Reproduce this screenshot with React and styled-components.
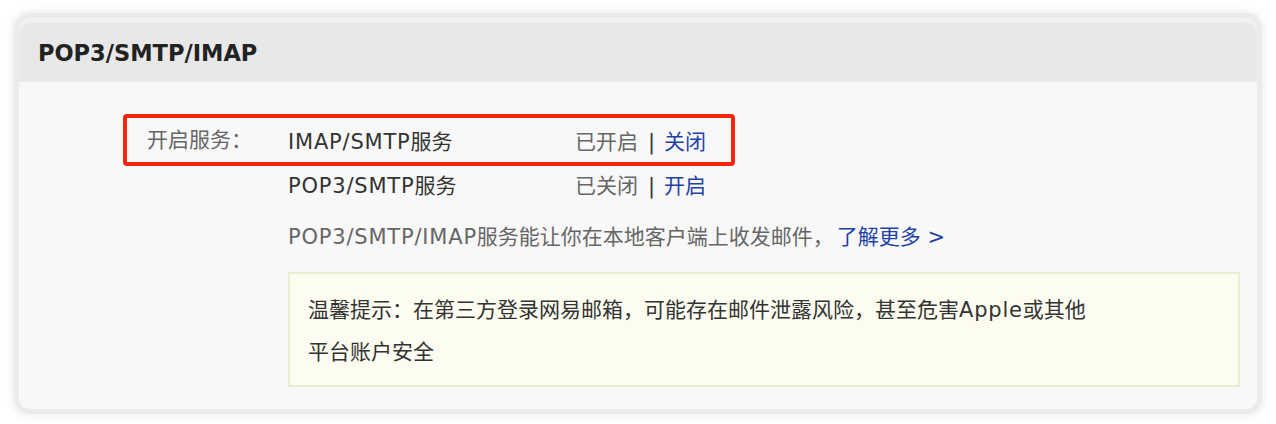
import React from "react";
import styled, { createGlobalStyle } from "styled-components";

const GlobalStyle = createGlobalStyle`
  html, body { margin: 0; padding: 0; background: #ffffff; }
  body {
    font-family: "DejaVu Sans", "Noto Sans CJK SC", sans-serif;
    -webkit-font-smoothing: antialiased;
  }
`;

const Page = styled.div`
  padding: 13px 14px 14px;
`;

const Card = styled.section`
  border: 5px solid #ebebeb;
  border-top-width: 5px;
  border-radius: 16px;
  box-shadow: 0 0 7px 2px rgba(0, 0, 0, 0.07);
  background: #f1f1f1;
  padding-top: 5px;
  overflow: hidden;
`;

const Panel = styled.div`
  background: #f8f8f8;
  border-radius: 10px 10px 11px 11px;
  overflow: hidden;
`;

const Header = styled.header`
  height: 59px;
  background: #e8e8e8;
  display: flex;
  align-items: center;
  padding-left: 19px;
  font-size: 22.5px;
  font-weight: 700;
  color: #222;
`;

const Body = styled.div`
  padding: 36px 17px 22px 128px;
  font-size: 21px;
  color: #333;
`;

const Latin = styled.span`
  letter-spacing: 0.8px;
`;

const ServiceRow = styled.div`
  position: relative;
  display: grid;
  grid-template-columns: 141px 287px auto;
  align-items: center;
  height: 44px;

  ${(p) =>
    p.$highlighted &&
    `
    &::after {
      content: "";
      position: absolute;
      left: -24px;
      top: -4px;
      width: 612px;
      bottom: -4px;
      border: 4px solid #f5260f;
      border-radius: 4px;
      box-sizing: border-box;
      pointer-events: none;
    }
  `}
`;

const Label = styled.span`
  color: #666;
  margin-top: -4px;
`;

const ServiceName = styled.span`
  color: #333;
`;

const Status = styled.span`
  color: #666;
`;

const Sep = styled.span`
  color: #333;
  margin: 0 9px 0 10px;
`;

const Link = styled.a`
  color: #1f42a8;
  text-decoration: none;
  cursor: pointer;
  margin-left: ${(p) => (p.$gap ? "3px" : "0")};
`;

const Description = styled.p`
  margin: 9px 0 0 141px;
  height: 44px;
  line-height: 44px;
  color: #666;
`;

const Notice = styled.div`
  margin: 13px 0 0 141px;
  background: #fcfcf0;
  border: 2px solid #ebedd3;
  padding: 15px 18px 12px;
  line-height: 42px;
  color: #333;
`;

const services = [
  { latin: "IMAP/SMTP", name: "服务", status: "已开启", action: "关闭", highlighted: true },
  { latin: "POP3/SMTP", name: "服务", status: "已关闭", action: "开启" },
];

export default function App() {
  return (
    <>
      <GlobalStyle />
      <Page>
        <Card>
          <Panel>
            <Header>POP3/SMTP/IMAP</Header>
            <Body>
              {services.map((s, i) => (
                <ServiceRow key={s.latin} $highlighted={s.highlighted}>
                  <Label>{i === 0 ? "开启服务：" : ""}</Label>
                  <ServiceName>
                    <Latin>{s.latin}</Latin>
                    {s.name}
                  </ServiceName>
                  <span>
                    <Status>{s.status}</Status>
                    <Sep>|</Sep>
                    <Link>{s.action}</Link>
                  </span>
                </ServiceRow>
              ))}
              <Description>
                <Latin>POP3/SMTP/IMAP</Latin>服务能让你在本地客户端上收发邮件，
                <Link $gap>了解更多 &gt;</Link>
              </Description>
              <Notice>
                温馨提示：在第三方登录网易邮箱，可能存在邮件泄露风险，甚至危害<Latin>Apple</Latin>或其他
                <br />
                平台账户安全
              </Notice>
            </Body>
          </Panel>
        </Card>
      </Page>
    </>
  );
}
